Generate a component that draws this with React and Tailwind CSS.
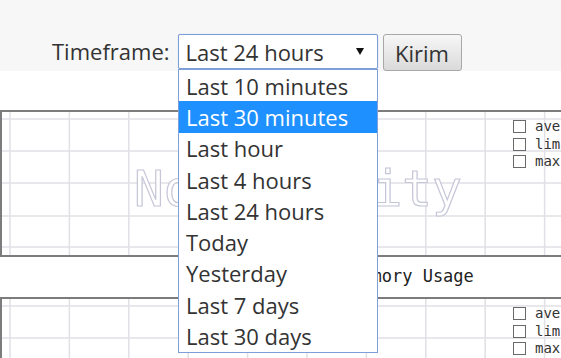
import React from 'react';

const options = [
  'Last 10 minutes',
  'Last 30 minutes',
  'Last hour',
  'Last 4 hours',
  'Last 24 hours',
  'Today',
  'Yesterday',
  'Last 7 days',
  'Last 30 days',
];

const legend = ['average', 'limit', 'max'];

const ChartGrid = ({ textY }) => {
  const cols = Array.from({ length: 11 }, (_, i) => 8 + i * 59.4);
  const rows = [7, 39, 71, 104, 135];
  return (
    <svg className="absolute inset-0" width="600" height="143">
      {cols.map(x => (
        <line key={`c${x}`} x1={x} y1="0" x2={x} y2="143" stroke="#e0e0e6" strokeWidth="1.5" />
      ))}
      {rows.map(y => (
        <line key={`r${y}`} x1="0" y1={y} x2="600" y2={y} stroke="#e0e0e6" strokeWidth="1.5" />
      ))}
      <text
        x="132"
        y={textY}
        fontFamily="'DejaVu Sans Mono', monospace"
        fontSize="49.5"
        fill="#ffffff"
        stroke="#c6c6d8"
        strokeWidth="1.2"
      >
        No Activity
      </text>
    </svg>
  );
};

const Chart = ({ textY = 94 }) => (
  <div className="relative w-[600px] h-[147px] border-2 border-[#7c7c7c] bg-white">
    <ChartGrid textY={textY} />
    <div className="absolute left-[511px] top-[8px] flex flex-col gap-[4.5px] font-['DejaVu_Sans_Mono',monospace] text-[14px] leading-[13px] text-[#333]">
      {legend.map(name => (
        <div key={name} className="flex items-center gap-[9px] whitespace-nowrap">
          <span className="w-[13px] h-[13px] border border-[#6a6a6a] bg-white" />
          {name}
        </div>
      ))}
    </div>
  </div>
);

const App = () => (
  <div className="relative w-[561px] h-[358px] overflow-hidden bg-white font-['Open_Sans',sans-serif] text-[#333]">
    <div className="h-[71px] bg-[#f7f7f7] flex items-start pt-[34px] pl-[52px]">
      <span className="text-[22px] leading-[35px] mr-[8px]">Timeframe:</span>
      <div className="w-[200px] h-[35px] border border-[#7d9ed6] rounded-[2px] bg-white flex items-center justify-between pl-[7px] pr-[13px] shadow-[0_0_1px_#9fb8e6]">
        <span className="text-[22px] leading-none">Last 24 hours</span>
        <span className="w-0 h-0 border-l-[4px] border-r-[4px] border-t-[7px] border-l-transparent border-r-transparent border-t-[#111]" />
      </div>
      <button
        type="button"
        className="ml-[5px] w-[79px] h-[37px] border border-[#a8a8a8] rounded-[3px] bg-gradient-to-b from-[#f7f7f7] to-[#dadada] text-[22px] leading-none text-[#333]"
      >
        Kirim
      </button>
    </div>

    <div className="mt-[39px]">
      <Chart />
    </div>
    <div className="h-[40px] flex items-center pl-[351px] font-['DejaVu_Sans_Mono',monospace] text-[17px] text-[#222] whitespace-nowrap">
      Memory Usage
    </div>
    <Chart textY={99} />

    <div className="absolute left-[178px] top-[69px] w-[200px] border border-[#7f9fd6] bg-white">
      {options.map(opt => (
        <div
          key={opt}
          className={`h-[31.3px] flex items-center pl-[7px] text-[22px] leading-none ${
            opt === 'Last 30 minutes' ? 'bg-[#1e90ff] text-white' : 'text-[#333]'
          }`}
        >
          {opt}
        </div>
      ))}
    </div>
  </div>
);

export default App;
